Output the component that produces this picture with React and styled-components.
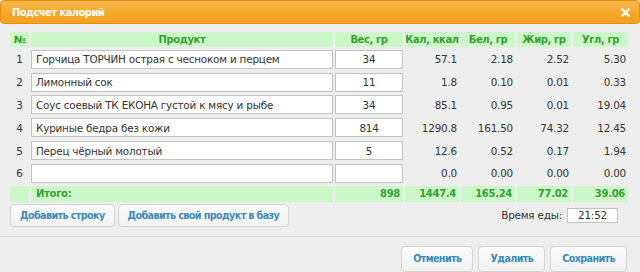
import React from "react";
import styled, { createGlobalStyle } from "styled-components";

const GlobalStyle = createGlobalStyle`
  html, body {
    margin: 0;
    padding: 0;
    background: #eeeeee;
  }
  body {
    font-family: "DejaVu Sans", sans-serif;
    font-size: 10.4px;
    letter-spacing: -0.2px;
    color: #333333;
  }
`;

const rows = [
  { name: "Горчица ТОРЧИН острая с чесноком и перцем", weight: "34", kcal: "57.1", prot: "2.18", fat: "2.52", carb: "5.30" },
  { name: "Лимонный сок", weight: "11", kcal: "1.8", prot: "0.10", fat: "0.01", carb: "0.33" },
  { name: "Соус соевый ТК ЕКОНА густой к мясу и рыбе", weight: "34", kcal: "85.1", prot: "0.95", fat: "0.01", carb: "19.04" },
  { name: "Куриные бедра без кожи", weight: "814", kcal: "1290.8", prot: "161.50", fat: "74.32", carb: "12.45" },
  { name: "Перец чёрный молотый", weight: "5", kcal: "12.6", prot: "0.52", fat: "0.17", carb: "1.94" },
  { name: "", weight: "", kcal: "0.0", prot: "0.00", fat: "0.00", carb: "0.00" },
];

const Dialog = styled.div`
  width: 640px;
  height: 272px;
  display: flex;
  flex-direction: column;
  background: #eeeeee;
  overflow: hidden;
  & > * {
    flex-shrink: 0;
  }
`;

const TitleBar = styled.div`
  box-sizing: border-box;
  height: 24px;
  display: flex;
  align-items: center;
  justify-content: space-between;
  padding: 0 9px 0 11px;
  border: 1px solid #e78f08;
  border-radius: 4px;
  background: linear-gradient(#f8b851, #f6a828 55%, #f4a023);
  color: #ffffff;
  font-weight: bold;
  font-size: 9.8px;
  letter-spacing: -0.45px;
`;

const CloseIcon = () => (
  <svg width="9" height="9" viewBox="0 0 9 9">
    <path d="M1.2 1.2 L7.8 7.8 M7.8 1.2 L1.2 7.8" stroke="#ffffff" strokeWidth="2.2" strokeLinecap="round" />
  </svg>
);

const Content = styled.div`
  padding: 6px 8px 0 10px;
`;

const Table = styled.table`
  width: 622px;
  table-layout: fixed;
  border-collapse: separate;
  border-spacing: 2px;
  margin-left: -2px;
`;

const HeadCell = styled.th`
  height: 15px;
  padding: 0;
  background: #ccf8c9;
  color: #35a032;
  font-weight: bold;
  font-size: 10px;
  letter-spacing: -0.4px;
  text-align: center;
  vertical-align: middle;
  white-space: nowrap;
`;

const Cell = styled.td`
  height: 20.8px;
  padding: 0 ${(p) => (p.$num ? "2px" : "0")} 0 0;
  text-align: ${(p) => (p.$num ? "right" : p.$center ? "center" : "left")};
  vertical-align: middle;
  white-space: nowrap;
`;

const TotalCell = styled.td`
  height: 16px;
  padding: 0 ${(p) => (p.$num ? "3px" : "0")} 0 ${(p) => (p.$label ? "5px" : "0")};
  background: #ccf8c9;
  color: #35a032;
  font-weight: bold;
  font-size: 10px;
  letter-spacing: -0.3px;
  text-align: ${(p) => (p.$num ? "right" : "left")};
  vertical-align: middle;
  white-space: nowrap;
`;

const TextField = styled.input`
  box-sizing: border-box;
  width: ${(p) => p.$width || "100%"};
  height: ${(p) => p.$height || "19px"};
  margin: 0;
  padding: 0 4px;
  border: 1px solid #c2c2c2;
  background: #ffffff;
  font-family: inherit;
  font-size: 10.4px;
  letter-spacing: -0.2px;
  color: #333333;
  text-align: ${(p) => (p.$center ? "center" : "left")};
  outline: none;
`;

const ActionRow = styled.div`
  display: flex;
  align-items: center;
  justify-content: space-between;
  padding-right: 14px;
`;

const ButtonGroup = styled.div`
  display: flex;
  gap: ${(p) => p.$gap || "3px"};
`;

const Button = styled.button`
  box-sizing: border-box;
  height: ${(p) => p.$height || "23px"};
  padding: 0 ${(p) => p.$pad || "9px"};
  border: 1px solid #d3d3d3;
  border-radius: 4px;
  background: linear-gradient(#fbfbfb, #f2f2f2);
  color: #3a8abb;
  font-family: inherit;
  font-size: 9.6px;
  letter-spacing: -0.6px;
  font-weight: bold;
  cursor: pointer;
`;

const TimeBox = styled.div`
  display: flex;
  align-items: center;
  gap: 5px;
  color: #333333;
`;

const ButtonPane = styled.div`
  margin-top: 9px;
  border-top: 1px solid #dddddd;
  display: flex;
  justify-content: flex-end;
  padding: 9px 13px 0 0;
`;

export default function App() {
  return (
    <>
      <GlobalStyle />
      <Dialog>
        <TitleBar>
          <span>Подсчет калорий</span>
          <CloseIcon />
        </TitleBar>
        <Content>
          <Table>
            <colgroup>
              <col style={{ width: 19 }} />
              <col style={{ width: 302 }} />
              <col style={{ width: 68 }} />
              <col style={{ width: 54 }} />
              <col style={{ width: 54 }} />
              <col style={{ width: 54 }} />
              <col style={{ width: 55 }} />
            </colgroup>
            <thead>
              <tr>
                <HeadCell>№</HeadCell>
                <HeadCell>Продукт</HeadCell>
                <HeadCell>Вес, гр</HeadCell>
                <HeadCell>Кал, ккал</HeadCell>
                <HeadCell>Бел, гр</HeadCell>
                <HeadCell>Жир, гр</HeadCell>
                <HeadCell>Угл, гр</HeadCell>
              </tr>
            </thead>
            <tbody>
              {rows.map((r, i) => (
                <tr key={i}>
                  <Cell $center>{i + 1}</Cell>
                  <Cell>
                    <TextField defaultValue={r.name} />
                  </Cell>
                  <Cell>
                    <TextField $center defaultValue={r.weight} />
                  </Cell>
                  <Cell $num>{r.kcal}</Cell>
                  <Cell $num>{r.prot}</Cell>
                  <Cell $num>{r.fat}</Cell>
                  <Cell $num>{r.carb}</Cell>
                </tr>
              ))}
              <tr>
                <TotalCell />
                <TotalCell $label>Итого:</TotalCell>
                <TotalCell $num>898</TotalCell>
                <TotalCell $num>1447.4</TotalCell>
                <TotalCell $num>165.24</TotalCell>
                <TotalCell $num>77.02</TotalCell>
                <TotalCell $num>39.06</TotalCell>
              </tr>
            </tbody>
          </Table>
          <ActionRow>
            <ButtonGroup>
              <Button>Добавить строку</Button>
              <Button>Добавить свой продукт в базу</Button>
            </ButtonGroup>
            <TimeBox>
              <span>Время еды:</span>
              <TextField $center $width="51px" $height="15px" defaultValue="21:52" />
            </TimeBox>
          </ActionRow>
        </Content>
        <ButtonPane>
          <ButtonGroup $gap="5px">
            <Button $height="26px" $pad="11px">Отменить</Button>
            <Button $height="26px" $pad="11px">Удалить</Button>
            <Button $height="26px" $pad="11px">Сохранить</Button>
          </ButtonGroup>
        </ButtonPane>
      </Dialog>
    </>
  );
}
